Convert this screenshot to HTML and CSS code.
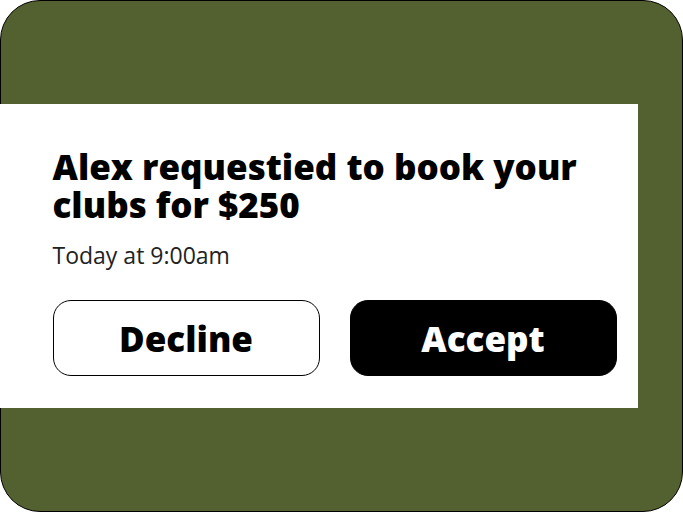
FILE: index.html
```html
<!DOCTYPE html>
<html>
<head>
<meta charset="utf-8">
<link rel="stylesheet" href="styles.css">
</head>
<body>
<div class="frame">
  <div class="card">
    <h1 class="title">Alex requestied to book your clubs for $250</h1>
    <p class="time">Today at 9:00am</p>
    <div class="actions">
      <button class="btn btn-decline">Decline</button>
      <button class="btn btn-accept">Accept</button>
    </div>
  </div>
</div>
</body>
</html>
```
FILE: styles.css
```css
* { box-sizing: border-box; }
html, body { margin: 0; padding: 0; background: #fff; }
body { width: 683px; height: 512px; font-family: "Open Sans", sans-serif; }
.frame {
  width: 683px;
  height: 512px;
  background: #52612f;
  border: 1.5px solid #000;
  border-radius: 40px;
  padding-top: 103px;
}
.card {
  background: #fff;
  width: 638px;
  height: 304px;
  margin-left: -1.5px;
  padding: 44px 21px 0 53px;
}
.title {
  margin: 0;
  font-size: 35px;
  font-weight: 800;
  line-height: 38px;
  color: #000;
  width: 560px;
}
.time {
  margin: 16px 0 0;
  font-size: 23px;
  line-height: 30px;
  color: #222;
}
.actions {
  display: flex;
  gap: 30px;
  margin-top: 30px;
}
.btn {
  width: 267px;
  height: 76px;
  border-radius: 18px;
  padding: 0;
  font-family: "Open Sans", sans-serif;
  font-weight: 800;
  font-size: 35px;
  cursor: pointer;
}
.btn-decline {
  background: #fff;
  border: 1px solid #000;
  color: #000;
}
.btn-accept {
  background: #000;
  border: 1px solid #000;
  color: #fff;
}
```
